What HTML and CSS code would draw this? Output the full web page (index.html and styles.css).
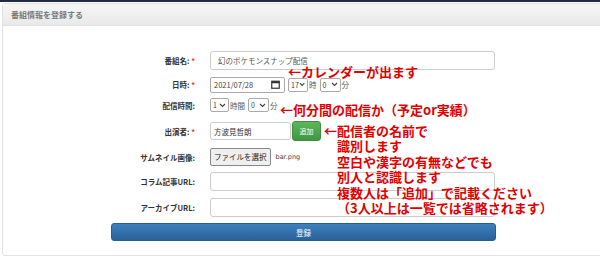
FILE: index.html
```html
<!DOCTYPE html>
<html lang="ja">
<head>
  <meta charset="UTF-8" />
  <title>番組情報を登録する</title>
  <link rel="stylesheet" href="styles.css">
</head>
<body>

  <div class="topbar"></div>

  <div class="panel">
    <div class="panel-heading">番組情報を登録する</div>

    <div class="panel-body">
      <form class="form">

        <div class="row h25">
          <label>番組名: <span class="req">*</span></label>
          <div class="ctrl"><input class="input full" type="text" value="幻のポケモンスナップ配信"></div>
        </div>

        <div class="row h23">
          <label>日時: <span class="req">*</span></label>
          <div class="ctrl">
            <span class="date">2021/07/28
              <svg class="cal" width="9" height="9" viewBox="0 0 9 9">
                <rect x="0.75" y="1.25" width="7.5" height="7" fill="none" stroke="#333" stroke-width="1.2"/>
                <rect x="0.75" y="1.25" width="7.5" height="2" fill="#333"/>
              </svg>
            </span>
            <span class="select w20">17<svg width="7" height="5" viewBox="0 0 7 5"><path d="M1 1l2.5 2.5L6 1" fill="none" stroke="#444" stroke-width="1.2"/></svg></span>
            <span class="unit">時</span>
            <span class="select w21">0<svg width="7" height="5" viewBox="0 0 7 5"><path d="M1 1l2.5 2.5L6 1" fill="none" stroke="#444" stroke-width="1.2"/></svg></span>
            <span class="unit">分</span>
          </div>
        </div>

        <div class="row h18">
          <label>配信時間:</label>
          <div class="ctrl">
            <span class="select w19">1<svg width="7" height="5" viewBox="0 0 7 5"><path d="M1 1l2.5 2.5L6 1" fill="none" stroke="#444" stroke-width="1.2"/></svg></span>
            <span class="unit">時間</span>
            <span class="select w21">0<svg width="7" height="5" viewBox="0 0 7 5"><path d="M1 1l2.5 2.5L6 1" fill="none" stroke="#444" stroke-width="1.2"/></svg></span>
            <span class="unit">分</span>
          </div>
        </div>

        <div class="row h34">
          <label>出演者: <span class="req">*</span></label>
          <div class="ctrl">
            <input class="input cast" type="text" value="方波見哲朗">
            <button class="btn-add" type="button">追加</button>
          </div>
        </div>

        <div class="row h18">
          <label>サムネイル画像:</label>
          <div class="ctrl">
            <span class="file-btn">ファイルを選択</span>
            <span class="file-name">bar.png</span>
          </div>
        </div>

        <div class="row h30">
          <label>コラム記事URL:</label>
          <div class="ctrl"><input class="input full" type="text"></div>
        </div>

        <div class="row h22">
          <label>アーカイブURL:</label>
          <div class="ctrl"><input class="input full" type="text"></div>
        </div>

        <div class="submit-row">
          <button class="btn-submit" type="button">登録</button>
        </div>

        <!-- annotations drawn on top of the form -->
        <div class="note note-date">←カレンダーが出ます</div>
        <div class="note note-time">←何分間の配信か（予定or実績）</div>
        <div class="note note-cast">
          <div>←配信者の名前で</div>
          <div class="indent">識別します</div>
          <div class="indent">空白や漢字の有無などでも</div>
          <div class="indent">別人と認識します</div>
          <div class="indent">複数人は「追加」で記載ください</div>
          <div class="indent">（3人以上は一覧では省略されます）</div>
        </div>

      </form>
    </div>
  </div>

</body>
</html>
```

FILE: styles.css
```css
body {
  margin: 0;
  background: #fff;
  font-family: "Noto Sans CJK JP", "Noto Sans", sans-serif;
  color: #333;
  overflow: hidden;
}

.topbar {
  height: 2px;
  background: #1f2b48;
}

.panel {
  margin: 1px -20px 0 2px;
  height: 253px;
  border: 1px solid #e2e2e2;
  border-radius: 3px;
  box-sizing: border-box;
}

.panel-heading {
  height: 21px;
  line-height: 21px;
  padding-left: 8px;
  font-size: 8px;
  font-weight: bold;
  color: #7a7a7a;
  background: linear-gradient(#f6f6f6, #e9e9e9);
  border-bottom: 1px solid #e0e0e0;
}

.panel-body {
  padding-top: 22px;
}

.form {
  position: relative;
  width: 598px;
}

.row {
  display: flex;
  align-items: center;
}

.h18 { height: 18px; }
.h22 { height: 22px; }
.h23 { height: 23px; }
.h25 { height: 25px; }
.h30 { height: 30px; }
.h34 { height: 34px; }

.row label {
  width: 192px;
  flex: none;
  text-align: right;
  font-size: 7.5px;
  font-weight: bold;
  color: #333;
}

.req {
  color: #e33;
}

.ctrl {
  margin-left: 15px;
  display: flex;
  align-items: center;
  font-size: 7.5px;
}

.input {
  height: 18px;
  box-sizing: border-box;
  border: 1px solid #ccc;
  border-radius: 3px;
  padding: 0 7px;
  font-family: inherit;
  font-size: 7.5px;
  color: #555;
  outline: none;
}

.full {
  width: 285px;
  height: 19px;
}

.cast {
  width: 81px;
  padding: 0 3px;
  color: #333;
}

.date {
  display: flex;
  align-items: center;
  justify-content: space-between;
  width: 75px;
  height: 16px;
  box-sizing: border-box;
  border: 1px solid #aaa;
  border-radius: 2px;
  padding: 0 4px 0 3px;
  font-size: 7.5px;
  color: #444;
}

.select {
  display: flex;
  align-items: center;
  justify-content: space-between;
  flex: none;
  height: 14px;
  box-sizing: border-box;
  border: 1px solid #aaa;
  border-radius: 2px;
  padding: 0 2px 0 2px;
  font-size: 7px;
  color: #444;
  margin-left: 3px;
  white-space: nowrap;
}

.row .ctrl > .select:first-child {
  margin-left: 0;
}

.w19 { width: 19px; }
.w20 { width: 20px; }
.w21 { width: 21px; }

.unit {
  margin-left: 1px;
  color: #555;
  white-space: nowrap;
}

.btn-add {
  width: 29px;
  height: 20px;
  margin-left: 1px;
  border: 1px solid #3e8f3e;
  border-radius: 3px;
  background: linear-gradient(#5cb85c, #419641);
  color: #fff;
  font-family: inherit;
  font-size: 7px;
  padding: 0;
}

.file-btn {
  height: 18px;
  line-height: 16px;
  box-sizing: border-box;
  padding: 0 3px;
  border: 1px solid #888;
  border-radius: 2px;
  background: #efefef;
  font-size: 7.5px;
  color: #222;
}

.file-name {
  margin-left: 5px;
  font-family: "DejaVu Sans", sans-serif;
  font-size: 6.5px;
  color: #444;
}

.submit-row {
  display: flex;
  margin-top: 5px;
  padding-left: 108px;
}

.btn-submit {
  width: 385px;
  height: 18px;
  border: 1px solid #285e8e;
  border-radius: 3px;
  background: linear-gradient(#3c80c0, #2b6198);
  color: #fff;
  font-family: inherit;
  font-size: 7.5px;
  padding: 0;
}

.note {
  position: absolute;
  color: #e10000;
  font-weight: bold;
  font-size: 13px;
  line-height: 15.4px;
  white-space: nowrap;
}

.note-date {
  left: 285px;
  top: 18px;
  line-height: 12px;
}

.note-time {
  left: 277px;
  top: 54px;
}

.note-cast {
  left: 321px;
  top: 75px;
}

.note-cast .indent {
  padding-left: 13px;
}
```
